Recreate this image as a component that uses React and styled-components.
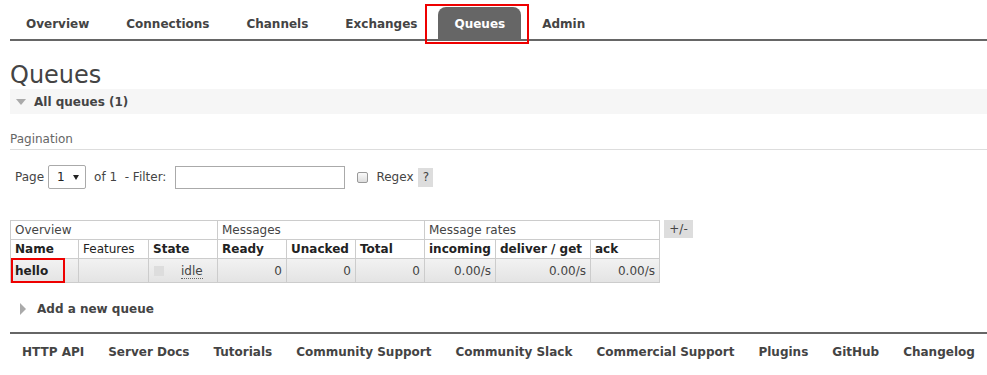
import React from "react";
import styled, { createGlobalStyle } from "styled-components";

const Global = createGlobalStyle`
  html, body {
    margin: 0;
    padding: 0;
    background: #fff;
  }
  body {
    font-family: "DejaVu Sans", Verdana, sans-serif;
    font-size: 12px;
    color: #444;
  }
`;

const Page = styled.div`
  padding-left: 10px;
  width: 977px;
`;

const Nav = styled.ul`
  display: flex;
  list-style: none;
  margin: 7px 0 0;
  padding: 0;
  border-bottom: 2px solid #666;
`;

const Tab = styled.li`
  position: relative;
  margin-right: 5px;
  padding: 9px 16px 7px;
  line-height: 16px;
  font-weight: bold;
  font-size: 12px;
  color: ${(p) => (p.$active ? "#fff" : "#444")};
  background: ${(p) => (p.$active ? "#666" : "transparent")};
  border-radius: 8px 8px 0 0;
`;

const Highlight = styled.span`
  position: absolute;
  left: ${(p) => p.$l}px;
  top: ${(p) => p.$t}px;
  right: ${(p) => p.$r}px;
  bottom: ${(p) => p.$b}px;
  border: 2px solid #e00;
  pointer-events: none;
`;

const Title = styled.h1`
  margin: 21px 0 0;
  font-size: 24px;
  line-height: 27px;
  font-weight: normal;
  color: #444;
`;

const SectionHead = styled.div`
  display: flex;
  align-items: center;
  height: 25px;
  background: #f6f6f6;
  font-weight: bold;
  font-size: 12px;
  color: #444;
`;

const Arrow = styled.span`
  width: 0;
  height: 0;
  margin: 0 ${(p) => (p.$open ? 8 : 11)}px 0 ${(p) => (p.$open ? 6 : 10)}px;
  ${(p) =>
    p.$open
      ? "border-left: 5px solid transparent; border-right: 5px solid transparent; border-top: 6px solid #aaa;"
      : "border-top: 6px solid transparent; border-bottom: 6px solid transparent; border-left: 6px solid #aaa;"}
`;

const SubTitle = styled.h3`
  margin: 17px 0 0;
  padding-bottom: 2px;
  font-size: 12px;
  line-height: 16px;
  font-weight: normal;
  color: #666;
  border-bottom: 1px solid #ddd;
`;

const FilterRow = styled.div`
  display: flex;
  align-items: center;
  margin: 15px 0 0 5px;
  height: 24px;
`;

const Label = styled.span`
  margin-right: ${(p) => p.$mr || 0}px;
  white-space: pre;
`;

const Select = styled.div`
  display: flex;
  align-items: center;
  justify-content: space-between;
  box-sizing: border-box;
  width: 38px;
  height: 24px;
  padding: 0 6px 0 8px;
  border: 1px solid #aaa;
  border-radius: 2px;
  margin-right: 8px;
  font-size: 12px;
  color: #222;
`;

const Caret = styled.span`
  width: 0;
  height: 0;
  border-left: 3px solid transparent;
  border-right: 3px solid transparent;
  border-top: 5px solid #222;
`;

const Input = styled.div`
  box-sizing: border-box;
  width: 170px;
  height: 23px;
  border: 1px solid #aaa;
  margin: 0 12px 0 9px;
`;

const Check = styled.span`
  box-sizing: border-box;
  width: 11px;
  height: 11px;
  border: 1px solid #999;
  border-radius: 2px;
  background: linear-gradient(#fafafa, #ddd);
  margin-right: 8px;
`;

const Help = styled.span`
  display: inline-flex;
  align-items: center;
  justify-content: center;
  width: 15px;
  height: 19px;
  background: #ddd;
  margin-left: 5px;
  color: #444;
`;

const TableWrap = styled.div`
  display: flex;
  align-items: flex-start;
  margin-top: 31px;
`;

const Table = styled.table`
  border-collapse: collapse;
  font-size: 12px;
`;

const GroupCell = styled.th`
  text-align: left;
  font-weight: normal;
  height: 18px;
  padding: 0 4px;
  border: 1px solid #ccc;
  color: #444;
`;

const HeadCell = styled.th`
  text-align: left;
  font-weight: ${(p) => (p.$light ? "normal" : "bold")};
  width: ${(p) => p.$w}px;
  height: 19px;
  padding: 0 4px;
  border: 1px solid #ccc;
  color: #222;
  box-sizing: border-box;
`;

const Row = styled.tr`
  background: linear-gradient(#f2f2f2, #e3e3e3);
`;

const Cell = styled.td`
  position: relative;
  height: 23px;
  padding: 0 4px;
  border: 1px solid #ccc;
  text-align: ${(p) => (p.$right ? "right" : "left")};
  font-weight: ${(p) => (p.$bold ? "bold" : "normal")};
  color: ${(p) => (p.$bold ? "#222" : "#444")};
`;

const StateBox = styled.span`
  display: inline-block;
  vertical-align: middle;
  width: 10px;
  height: 10px;
  background: #ddd;
  margin: 0 17px 0 1px;
`;

const Idle = styled.abbr`
  text-decoration: none;
  border-bottom: 1px dotted #666;
`;

const Toggle = styled.span`
  display: inline-flex;
  align-items: center;
  justify-content: center;
  width: 29px;
  height: 18px;
  margin-left: 4px;
  background: #ddd;
  color: #444;
`;

const AddQueue = styled.div`
  display: flex;
  align-items: center;
  height: 24px;
  margin-top: 14px;
  font-weight: bold;
  font-size: 12px;
  color: #444;
`;

const Footer = styled.div`
  display: flex;
  margin-top: 11px;
  border-top: 2px solid #666;
  padding: 10px 0 0;
`;

const FooterLink = styled.span`
  padding: 0 12px;
  font-weight: bold;
  line-height: 16px;
  color: #444;
`;

const tabs = ["Overview", "Connections", "Channels", "Exchanges", "Queues", "Admin"];
const links = [
  "HTTP API",
  "Server Docs",
  "Tutorials",
  "Community Support",
  "Community Slack",
  "Commercial Support",
  "Plugins",
  "GitHub",
  "Changelog",
];

const columns = [
  { label: "Name", w: 68 },
  { label: "Features", w: 70, light: true },
  { label: "State", w: 69 },
  { label: "Ready", w: 69 },
  { label: "Unacked", w: 69 },
  { label: "Total", w: 69 },
  { label: "incoming", w: 71 },
  { label: "deliver / get", w: 95 },
  { label: "ack", w: 69 },
];

export default function App() {
  return (
    <Page>
      <Global />
      <Nav>
        {tabs.map((t) => (
          <Tab key={t} $active={t === "Queues"}>
            {t}
            {t === "Queues" && <Highlight $l={-13} $t={-3} $r={-8} $b={-5} />}
          </Tab>
        ))}
      </Nav>

      <Title>Queues</Title>
      <SectionHead>
        <Arrow $open />
        All queues (1)
      </SectionHead>

      <SubTitle>Pagination</SubTitle>
      <FilterRow>
        <Label $mr={4}>Page</Label>
        <Select>
          1 <Caret />
        </Select>
        <Label>of 1  - Filter:</Label>
        <Input />
        <Check />
        <Label>Regex</Label>
        <Help>?</Help>
      </FilterRow>

      <TableWrap>
        <Table>
          <thead>
            <tr>
              <GroupCell colSpan={3}>Overview</GroupCell>
              <GroupCell colSpan={3}>Messages</GroupCell>
              <GroupCell colSpan={3}>Message rates</GroupCell>
            </tr>
            <tr>
              {columns.map((c) => (
                <HeadCell key={c.label} $w={c.w} $light={c.light}>
                  {c.label}
                </HeadCell>
              ))}
            </tr>
          </thead>
          <tbody>
            <Row>
              <Cell $bold>
                hello
                <Highlight $l={0} $t={-1} $r={13} $b={-1} />
              </Cell>
              <Cell />
              <Cell>
                <StateBox />
                <Idle>idle</Idle>
              </Cell>
              <Cell $right>0</Cell>
              <Cell $right>0</Cell>
              <Cell $right>0</Cell>
              <Cell $right>0.00/s</Cell>
              <Cell $right>0.00/s</Cell>
              <Cell $right>0.00/s</Cell>
            </Row>
          </tbody>
        </Table>
        <Toggle>+/-</Toggle>
      </TableWrap>

      <AddQueue>
        <Arrow />
        Add a new queue
      </AddQueue>

      <Footer>
        {links.map((l) => (
          <FooterLink key={l}>{l}</FooterLink>
        ))}
      </Footer>
    </Page>
  );
}
